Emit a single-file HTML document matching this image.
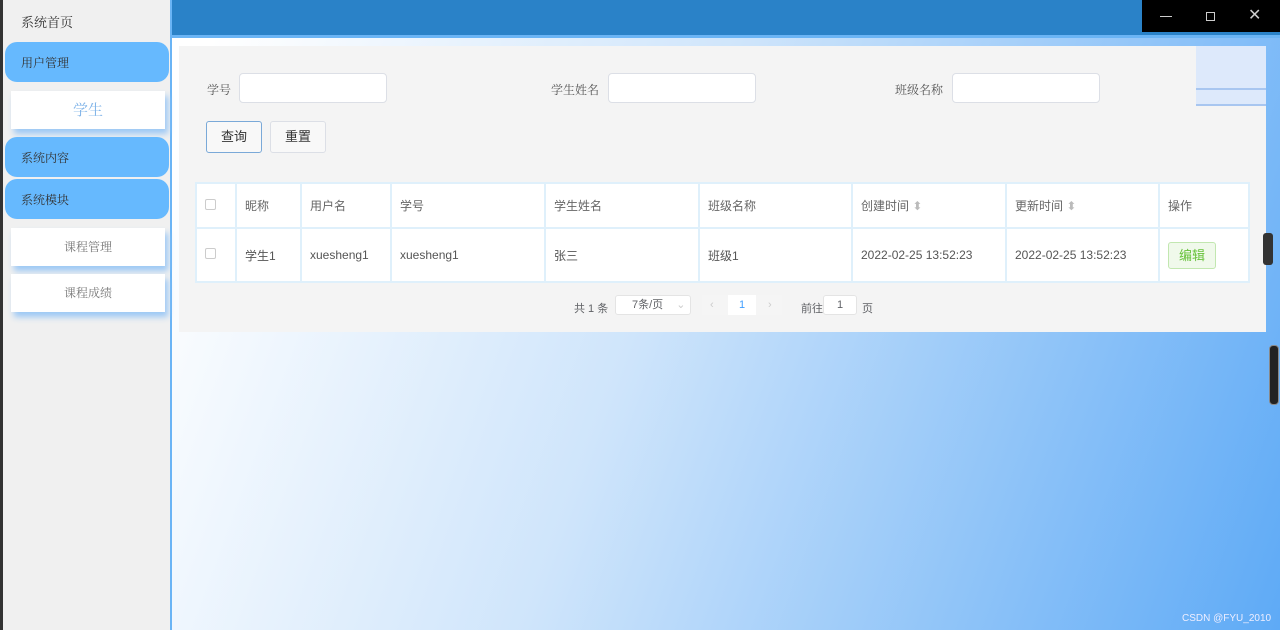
<!DOCTYPE html>
<html><head><meta charset="utf-8"><style>
*{margin:0;padding:0;box-sizing:border-box}
body{width:1280px;height:630px;overflow:hidden;position:relative;font-family:"Liberation Sans","Noto Sans CJK SC",sans-serif;font-size:12px;color:#606266;background:linear-gradient(110deg,#fff 15%,#cfe5fb 50%,#5eaaf6 100%)}
.side{position:absolute;left:0;top:0;width:172px;height:630px;background:#f0f0f0;border-left:3px solid #333;border-right:2px solid #6ab4f5}
.side .t{position:absolute;left:18px;top:12px;font-size:13px;color:#333;font-family:"Noto Serif CJK SC",serif}
.grp{position:absolute;left:2px;width:164px;height:40px;background:#66b9fe;border-radius:12px;padding:12px 0 0 16px;font-size:12px;color:#333;font-family:"Noto Serif CJK SC",serif}
.sub{position:absolute;left:8px;width:154px;height:38px;background:#fff;box-shadow:3px 5px 6px #9cc8f5;text-align:center;line-height:38px;color:#777;font-family:"Noto Serif CJK SC",serif}
.hdr{position:absolute;left:172px;top:0;width:1108px;height:38px;background:#2a82c8;border-bottom:3px solid #6ab4f5}
.win{position:absolute;left:1142px;top:0;width:138px;height:32px;background:#000;color:#ddd}
.card{position:absolute;left:179px;top:46px;width:1087px;height:286px;background:#f4f4f4}
.lbl{position:absolute;font-size:12px;color:#555;font-family:"Noto Serif CJK SC",serif}
.inp{position:absolute;width:148px;height:30px;background:#fff;border:1px solid #dcdfe6;border-radius:4px}
.btn{position:absolute;height:32px;width:56px;border:1px solid #dcdfe6;background:#f8f8f8;border-radius:3px;text-align:center;line-height:30px;font-size:13px;color:#333}
table{position:absolute;left:195px;top:182px;width:1055px;border-collapse:collapse;background:#fff}
td{border:2px solid #dff0fb;padding:0 8px;color:#555;font-size:12px}
tr.h td{height:45px;font-weight:normal;color:#666}
tr.b td{height:54px}
.cb{display:inline-block;width:11px;height:11px;border:1px solid #ccc;border-radius:2px}
.edit{display:inline-block;width:48px;height:27px;border:1px solid #c2e7b0;background:#f0f9eb;color:#67c23a;border-radius:3px;text-align:center;line-height:25px;font-size:13px}
.pg{position:absolute;top:295px;font-size:11px}
</style></head><body>
<div class="hdr"></div>
<div class="win"><span style="position:absolute;left:18px;top:16px;width:12px;border-top:1px solid #ccc"></span><span style="position:absolute;left:64px;top:12px;width:9px;height:9px;border:1px solid #ccc"></span><span style="position:absolute;left:106px;top:5px;font-size:16px;color:#ccc">✕</span></div>
<div class="side">
<div class="t">系统首页</div>
<div class="grp" style="top:42px">用户管理</div>
<div class="sub" style="top:91px;color:#7fb3e8;font-size:15px">学生</div>
<div class="grp" style="top:137px">系统内容</div>
<div class="grp" style="top:179px">系统模块</div>
<div class="sub" style="top:228px">课程管理</div>
<div class="sub" style="top:274px">课程成绩</div>
</div>
<div class="card"></div>
<div style="position:absolute;left:1196px;top:46px;width:70px;height:60px;background:#dde9fb;border-bottom:2px solid #a8c6f0"></div>
<div style="position:absolute;left:1196px;top:88px;width:70px;border-top:2px solid #a8c6f0"></div>
<div class="lbl" style="left:207px;top:81px">学号</div><div class="inp" style="left:239px;top:73px"></div>
<div class="lbl" style="left:551px;top:81px">学生姓名</div><div class="inp" style="left:608px;top:73px"></div>
<div class="lbl" style="left:895px;top:81px">班级名称</div><div class="inp" style="left:952px;top:73px"></div>
<div class="btn" style="left:206px;top:121px;border-color:#7aa9d8">查询</div>
<div class="btn" style="left:270px;top:121px">重置</div>
<table>
<tr class="h"><td style="width:40px"><span class="cb"></span></td><td style="width:65px">昵称</td><td style="width:90px">用户名</td><td style="width:154px">学号</td><td style="width:154px">学生姓名</td><td style="width:153px">班级名称</td><td style="width:154px">创建时间 <span style="color:#bbb">⬍</span></td><td style="width:153px">更新时间 <span style="color:#bbb">⬍</span></td><td>操作</td></tr>
<tr class="b"><td><span class="cb"></span></td><td>学生1</td><td>xuesheng1</td><td>xuesheng1</td><td>张三</td><td>班级1</td><td>2022-02-25 13:52:23</td><td>2022-02-25 13:52:23</td><td><span class="edit">编辑</span></td></tr>
</table>
<div class="pg" style="left:574px;top:300px">共 1 条</div>
<div style="position:absolute;left:615px;top:295px;width:76px;height:20px;background:#fff;border:1px solid #e4e4e4;border-radius:3px;font-size:11px;line-height:18px;padding-left:16px">7条/页 <span style="color:#ccc;margin-left:10px">⌄</span></div>
<div style="position:absolute;left:702px;top:295px;width:80px;height:20px;background:#f5f5f5;font-size:11px;line-height:20px"><span style="position:absolute;left:8px;color:#ccc">‹</span><span style="position:absolute;left:26px;width:28px;height:20px;background:#fff;text-align:center;color:#409eff">1</span><span style="position:absolute;left:66px;color:#ccc">›</span></div>
<div class="pg" style="left:801px;top:300px">前往</div>
<div style="position:absolute;left:823px;top:295px;width:34px;height:20px;background:#fff;border:1px solid #e4e4e4;border-radius:3px;font-size:11px;text-align:center;line-height:18px">1</div>
<div class="pg" style="left:862px;top:300px">页</div>
<div style="position:absolute;left:1263px;top:233px;width:10px;height:32px;background:#333;border-radius:3px"></div>
<div style="position:absolute;left:1269px;top:345px;width:10px;height:60px;background:#222;border-radius:4px;border:1px solid #888"></div>
<div style="position:absolute;left:1182px;top:613px;font-size:10px;color:#eef">CSDN @FYU_2010</div>
</body></html>
